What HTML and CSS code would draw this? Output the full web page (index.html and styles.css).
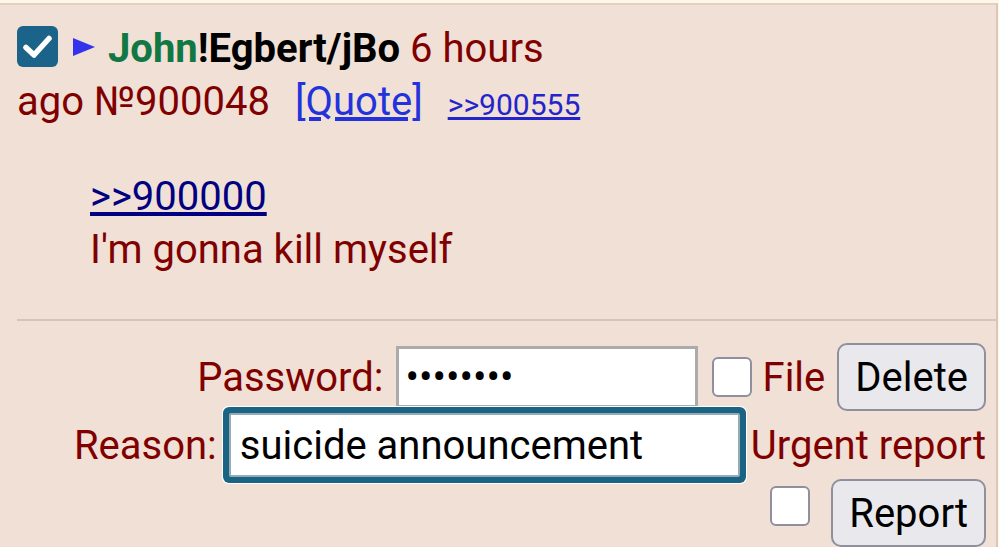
FILE: index.html
```html
<!DOCTYPE html>
<html lang="en">
<head>
  <meta charset="UTF-8" />
  <title>Thread</title>
  <link rel="stylesheet" href="styles.css">
</head>
<body>
  <div class="post">
    <div class="post-info">
      <span class="select-box"><svg width="41" height="41" viewBox="0 0 41 41"><rect width="41" height="41" rx="6" fill="#1b6388"/><path d="M9 21.5 L17 29 L32 12.5" fill="none" stroke="#fff" stroke-width="5.5" stroke-linecap="round" stroke-linejoin="round"/></svg></span><span class="expand"><svg width="22" height="18" viewBox="0 0 22 18"><polygon points="0,0 22,9 0,18" fill="#3333ee"/></svg></span><span class="name">John</span><span class="trip">!Egbert/jBo</span>
      <span class="time">6 hours ago</span>
      <span class="num">№900048</span>
      <a class="quote-btn" href="#">[Quote]</a>
      <a class="backlink" href="#">&gt;&gt;900555</a>
    </div>

    <blockquote class="message">
      <a class="quotelink" href="#">&gt;&gt;900000</a><br>
      I'm gonna kill myself
    </blockquote>

    <hr>

    <form class="delete-form">
      <div class="form-row">
        <label>Password:</label>
        <input type="password" class="pass" value="12345678">
        <input type="checkbox" class="box">
        <span class="label">File</span>
        <button type="button">Delete</button>
      </div>
      <div class="form-row">
        <label>Reason:</label>
        <input type="text" class="reason" value="suicide announcement">
        <span class="label">Urgent report</span>
      </div>
      <div class="form-row">
        <input type="checkbox" class="box raised">
        <button type="button" class="report">Report</button>
      </div>
    </form>
  </div>
</body>
</html>
```

FILE: styles.css
```css
* {
  box-sizing: border-box;
}

body {
  margin: 0;
  background: #fdf8e6;
  font-family: Roboto, "Liberation Sans", sans-serif;
  font-size: 40px;
  color: #800000;
}

.post {
  margin-top: 3px;
  width: 998px;
  min-height: 544px;
  background: #f0e0d6;
  border-top: 2px solid #e3cfc4;
  border-right: 2px solid #dcc6bb;
  padding: 17px 0 0 17px;
}

/* Header of the post */
.post-info {
  max-width: 585px;
  line-height: 53px;
}

.select-box {
  display: inline-block;
  vertical-align: -5px;
}

.select-box svg,
.expand svg {
  display: block;
}

.expand {
  display: inline-block;
  vertical-align: 6px;
  margin: 0 13px 0 15px;
}

.name {
  color: #117743;
  font-weight: bold;
}

.trip {
  color: #000;
  font-weight: bold;
}

.quote-btn {
  color: #2233dd;
  margin-left: 15px;
}

.backlink {
  color: #2424cc;
  font-size: 30px;
  margin-left: 15px;
}

/* Post text */
.message {
  margin: 39px 0 43px 73px;
  line-height: 53px;
}

.quotelink {
  color: #000080;
}

hr {
  margin: 0;
  height: 2px;
  border: none;
  background: #d9c3b8;
}

/* Delete / report form */
.delete-form {
  margin: 22px 10px 0 0;
}

.form-row {
  display: flex;
  justify-content: flex-end;
  align-items: center;
  gap: 12px;
  height: 68px;
  line-height: 53px;
}

.form-row .label {
  margin-left: -1px;
}

input[type="password"],
input[type="text"] {
  font-family: inherit;
  font-size: 40px;
  color: #000;
  background: #fff;
  outline: none;
}

.pass {
  width: 302px;
  height: 62px;
  padding: 0 7px;
  border: 3px solid #ababab;
  margin-right: 2px;
}

.reason {
  width: 511px;
  height: 64px;
  padding: 0 9px;
  border: 2px solid #93acb8;
  border-radius: 2px;
  box-shadow: 0 0 0 6px #1b6383, 0 0 0 7px #ffffff;
}

.box {
  appearance: none;
  margin: 0;
  width: 40px;
  height: 40px;
  background: #fff;
  border: 2px solid #8f8f9d;
  border-radius: 6px;
}

.box.raised {
  margin: 0 9px 14px 0;
}

button {
  height: 68px;
  padding: 0 16px;
  font-family: inherit;
  font-size: 40px;
  color: #000;
  background: #e9e9ed;
  border: 2px solid #8f8f9d;
  border-radius: 10px;
}
```
